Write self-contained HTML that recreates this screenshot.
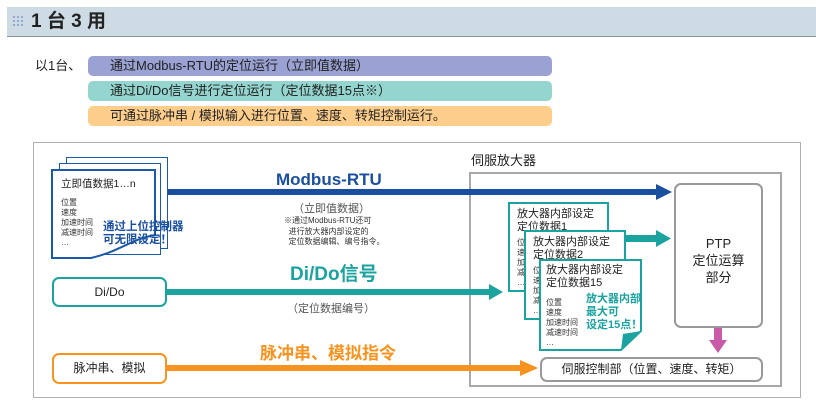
<!DOCTYPE html>
<html><head><meta charset="utf-8"><style>
*{margin:0;padding:0;box-sizing:border-box}
body{width:816px;height:410px;background:#fff;position:relative;overflow:hidden;font-family:"Liberation Sans","Noto Sans CJK SC",sans-serif;color:#222}
.a{position:absolute;white-space:nowrap}
.pill{position:absolute;left:88px;width:464px;height:20px;border-radius:5px;font-size:13px;line-height:20px;padding-left:22px;color:#222}
.box{position:absolute;background:#fff;border-radius:7px}
.sheet{position:absolute;background:#fff;border:2px solid #1a5aa8}
.card{position:absolute;background:#fff;border:2px solid #1aa39f;font-size:11px;line-height:13px;padding:4px 0 0 7px}
.sm{font-size:8px;line-height:10px}
</style></head><body>
<div class="a" style="left:7px;top:7px;width:809px;height:30px;background:#cddbe5;border-bottom:1px solid #8a8f94"></div>
<svg class="a" style="left:12px;top:15px" width="14" height="14"><g fill="#8fa3cc"><circle cx="2" cy="2" r="1.1"/><circle cx="6" cy="2" r="1.1"/><circle cx="10" cy="2" r="1.1"/><circle cx="2" cy="6" r="1.1"/><circle cx="6" cy="6" r="1.1"/><circle cx="10" cy="6" r="1.1"/><circle cx="2" cy="10" r="1.1"/><circle cx="6" cy="10" r="1.1"/><circle cx="10" cy="10" r="1.1"/></g></svg>
<div class="a" style="left:31px;top:10px;font-size:19px;font-weight:bold;line-height:24px;color:#222">1 台 3 用</div>
<div class="a" style="left:35px;top:57px;font-size:13px;line-height:18px">以1台、</div>
<div class="pill" style="top:56px;background:#9aa2d4">通过Modbus-RTU的定位运行（立即值数据）</div>
<div class="pill" style="top:81px;background:#94d6cf">通过Di/Do信号进行定位运行（定位数据15点※）</div>
<div class="pill" style="top:106px;background:#fdcd8b">可通过脉冲串 / 模拟输入进行位置、速度、转矩控制运行。</div>

<div class="a" style="left:33px;top:142px;width:768px;height:256px;border:1px solid #b0b0b0"></div>
<div class="a" style="left:471px;top:153px;font-size:13px;line-height:16px">伺服放大器</div>
<div class="a" style="left:469px;top:172px;width:313px;height:215px;border:2px solid #a8a8a8"></div>

<!-- lines -->
<div class="a" style="left:166px;top:189px;width:492px;height:6px;background:#1a4fa0"></div>
<svg class="a" style="left:656px;top:184px" width="16" height="16"><polygon points="0,0 16,8 0,16" fill="#1a4fa0"/></svg>
<div class="a" style="left:166px;top:289px;width:325px;height:6px;background:#1aa39f"></div>
<svg class="a" style="left:489px;top:284px" width="14" height="16"><polygon points="0,0 14,8 0,16" fill="#1aa39f"/></svg>
<div class="a" style="left:166px;top:365px;width:356px;height:6px;background:#f7931e"></div>
<svg class="a" style="left:520px;top:360px" width="18" height="16"><polygon points="0,0 18,8 0,16" fill="#f7931e"/></svg>
<div class="a" style="left:620px;top:235px;width:38px;height:7px;background:#1aa39f"></div>
<svg class="a" style="left:656px;top:230px" width="15" height="17"><polygon points="0,0 15,8.5 0,17" fill="#1aa39f"/></svg>

<div class="a" style="left:276px;top:170px;font-size:17px;font-weight:bold;color:#1a4fa0">Modbus-RTU</div>
<div class="a" style="left:293px;top:200px;font-size:11px;color:#555">（立即值数据）</div>
<div class="a sm" style="left:284px;top:216px;font-size:8px;line-height:10.5px;color:#333">※通过Modbus-RTU还可<br>&nbsp;&nbsp;进行放大器内部设定的<br>&nbsp;&nbsp;定位数据编辑、编号指令。</div>
<div class="a" style="left:290px;top:264px;font-size:19px;font-weight:bold;color:#1aa39f;line-height:22px">Di/Do信号</div>
<div class="a" style="left:287px;top:300px;font-size:11px;color:#555">（定位数据编号）</div>
<div class="a" style="left:260px;top:344px;font-size:17px;font-weight:bold;color:#f7931e;line-height:20px">脉冲串、模拟指令</div>

<!-- doc stack -->
<div class="sheet" style="left:66px;top:157px;width:102px;height:92px;border-width:1.5px"></div>
<div class="sheet" style="left:59px;top:163px;width:102px;height:92px;border-width:1.5px"></div>
<svg class="a" style="left:51px;top:169px" width="106" height="92"><path d="M1,1 H104 V66 C80,70 70,82 40,89 H1 Z" fill="#fff" stroke="#1a5aa8" stroke-width="2"/></svg>
<div class="a" style="left:61px;top:178px;font-size:10.5px;line-height:13px">立即值数据1…n</div>
<div class="a sm" style="left:61px;top:198px;color:#333">位置<br>速度<br>加速时间<br>减速时间<br>…</div>
<div class="a" style="left:103px;top:221px;font-size:11.5px;font-weight:bold;line-height:13px;color:#1a4fa0">通过上位控制器<br>可无限设定！</div>

<div class="box" style="left:52px;top:277px;width:115px;height:30px;border:2px solid #1aa39f;font-size:12px;text-align:center;line-height:26px">Di/Do</div>
<div class="box" style="left:52px;top:353px;width:115px;height:31px;border:2px solid #f7931e;font-size:12px;text-align:center;line-height:27px">脉冲串、模拟</div>

<!-- cards -->
<div class="card" style="left:508px;top:202px;width:101px;height:90px">放大器内部设定<br>定位数据1<div class="sm" style="margin-top:4px;color:#333">位<br>速<br>加<br>减<br>…</div></div>
<div class="card" style="left:524px;top:230px;width:102px;height:90px">放大器内部设定<br>定位数据2<div class="sm" style="margin-top:4px;color:#333">位<br>速<br>加<br>减<br>…</div></div>
<svg class="a" style="left:539px;top:259px" width="104" height="93"><path d="M1,1 H102 V72 L82,91 H1 Z" fill="#fff" stroke="#1aa39f" stroke-width="2"/><path d="M82,91 L84,75 L102,72 Z" fill="#1aa39f"/></svg>
<div class="a" style="left:546px;top:264px;font-size:11px;line-height:13px">放大器内部设定<br>定位数据15</div>
<div class="a sm" style="left:546px;top:298px;color:#333">位置<br>速度<br>加速时间<br>减速时间<br>…</div>
<div class="a" style="left:586px;top:293px;font-size:11px;font-weight:bold;line-height:13px;color:#1aa39f">放大器内部<br>最大可<br>设定15点！</div>

<div class="box" style="left:674px;top:183px;width:89px;height:145px;border:2px solid #999;font-size:13px;text-align:center;line-height:17px;padding-top:50px">PTP<br>定位运算<br>部分</div>
<div class="a" style="left:714px;top:328px;width:8px;height:13px;background:#c85aa8"></div>
<svg class="a" style="left:709px;top:340px" width="18" height="13"><polygon points="0,0 18,0 9,13" fill="#c85aa8"/></svg>
<div class="box" style="left:540px;top:357px;width:223px;height:25px;border:2px solid #999;font-size:12px;text-align:center;line-height:21px">伺服控制部（位置、速度、转矩）</div>
</body></html>
